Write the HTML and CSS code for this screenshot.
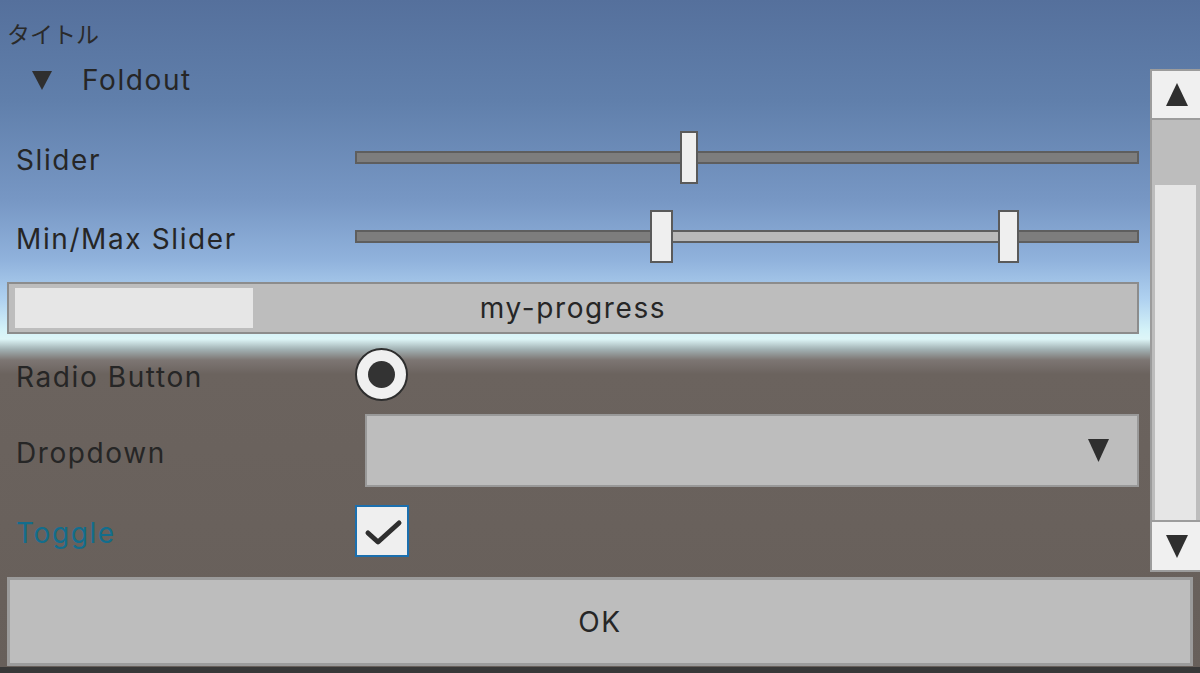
FILE: index.html
```html
<!DOCTYPE html>
<html lang="ja">
<head>
  <meta charset="UTF-8" />
  <meta name="viewport" content="width=device-width, initial-scale=1.0" />
  <title>UI Toolkit Sample</title>
  <link rel="stylesheet" href="styles.css">
</head>
<body>

  <div class="title">タイトル</div>

  <div class="main">
    <div class="content">
      <div class="foldout-header">
        <svg class="foldout-arrow" width="20" height="20" viewBox="0 0 20 20"><polygon points="0,1 20,1 10,20" fill="#2f2f2f"/></svg>
        <span>Foldout</span>
      </div>

      <div class="row row-slider">
        <label class="field-label">Slider</label>
        <div class="track">
          <div class="thumb" style="left: 323px"></div>
        </div>
      </div>

      <div class="row row-minmax">
        <label class="field-label">Min/Max Slider</label>
        <div class="track">
          <div class="range" style="left: 316px; width: 327px"></div>
          <div class="thumb thumb-wide" style="left: 293px"></div>
          <div class="thumb thumb-mid" style="left: 641px"></div>
        </div>
      </div>

      <div class="progress">
        <div class="progress-fill" style="width: 238px"></div>
        <span class="progress-text">my-progress</span>
      </div>

      <div class="row row-radio">
        <label class="field-label">Radio Button</label>
        <div class="radio"><div class="radio-dot"></div></div>
      </div>

      <div class="row row-dropdown">
        <label class="field-label">Dropdown</label>
        <div class="dropdown">
          <svg width="21" height="23" viewBox="0 0 21 23"><polygon points="0,0 21,0 10.5,23" fill="#2f2f2f"/></svg>
        </div>
      </div>

      <div class="row row-toggle">
        <label class="field-label toggle-label">Toggle</label>
        <div class="checkbox">
          <svg width="50" height="48" viewBox="0 0 50 48"><polyline points="11,26 21,35 42,16" fill="none" stroke="#2f2f2f" stroke-width="5" stroke-linecap="round" stroke-linejoin="round"/></svg>
        </div>
      </div>
    </div>

    <div class="scrollbar">
      <div class="scroll-btn scroll-up">
        <svg width="22" height="23" viewBox="0 0 22 23"><polygon points="11,0 22,23 0,23" fill="#2f2f2f"/></svg>
      </div>
      <div class="scroll-track">
        <div class="scroll-thumb"></div>
      </div>
      <div class="scroll-btn scroll-down">
        <svg width="22" height="23" viewBox="0 0 22 23"><polygon points="0,0 22,0 11,23" fill="#2f2f2f"/></svg>
      </div>
    </div>
  </div>

  <button class="ok-button">OK</button>
  <div class="bottom-edge"></div>

</body>
</html>
```

FILE: styles.css
```css
html, body {
  margin: 0;
  padding: 0;
}
body {
  height: 673px;
  overflow: hidden;
  display: flex;
  flex-direction: column;
  font-family: Inter, "Noto Sans", sans-serif;
  font-size: 28px;
  letter-spacing: 1.6px;
  color: #262626;
  background: linear-gradient(to bottom,
    #55709c 0px,
    #607fab 100px,
    #7797c4 200px,
    #90b2dc 260px,
    #b0d2f0 300px,
    #d4f2f8 330px,
    #def6f8 339px,
    #a3b3b5 349px,
    #7d7673 360px,
    #6b635e 374px,
    #675f5a 673px);
}
.title {
  height: 60px;
  box-sizing: border-box;
  padding: 20px 0 0 7px;
  font-family: "Noto Sans CJK JP", sans-serif;
  font-size: 23px;
  letter-spacing: 0;
  line-height: 26px;
  color: #2a2a2a;
}
.main {
  display: flex;
  height: 517px;
}
.content {
  width: 1150px;
  box-sizing: border-box;
  padding-right: 11px;
  display: flex;
  flex-direction: column;
}
.foldout-header {
  height: 40px;
  display: flex;
  align-items: center;
  padding-left: 32px;
}
.foldout-arrow {
  margin-right: 30px;
}
.row {
  display: flex;
  align-items: center;
  padding-left: 16px;
}
.field-label {
  width: 339px;
  flex-shrink: 0;
  padding-top: 4px;
}
.row-slider {
  margin-top: 31px;
  height: 53px;
}
.row-minmax {
  margin-top: 26px;
  height: 53px;
}
.row-radio {
  margin-top: 14px;
  height: 53px;
}
.row-dropdown {
  margin-top: 13px;
  height: 73px;
}
.row-toggle {
  margin-top: 18px;
  height: 52px;
}
.track {
  flex: 1;
  height: 13px;
  box-sizing: border-box;
  border: 2px solid #5e5e5e;
  background: #7d7d7d;
  position: relative;
}
.range {
  position: absolute;
  top: 0;
  bottom: 0;
  background: #b9b9b9;
}
.thumb {
  position: absolute;
  top: -22px;
  width: 18px;
  height: 53px;
  box-sizing: border-box;
  border: 2px solid #5a5a5a;
  background: #efefef;
}
.thumb-wide {
  width: 23px;
}
.thumb-mid {
  width: 21px;
}
.progress {
  margin: 19px 0 0 7px;
  height: 52px;
  box-sizing: border-box;
  border: 2px solid #8c8c8c;
  background: #bdbdbd;
  padding: 4px 6px;
  position: relative;
  display: flex;
}
.progress-fill {
  background: #e6e6e6;
  height: 100%;
}
.progress-text {
  position: absolute;
  left: 0;
  right: 0;
  top: 0;
  bottom: 0;
  display: flex;
  align-items: center;
  justify-content: center;
}
.radio {
  width: 53px;
  height: 53px;
  box-sizing: border-box;
  border-radius: 50%;
  border: 2px solid #2e2e2e;
  background: #f0f0f0;
  display: flex;
  align-items: center;
  justify-content: center;
}
.radio-dot {
  width: 27px;
  height: 27px;
  border-radius: 50%;
  background: #333;
}
.dropdown {
  flex: 1;
  margin-left: 10px;
  height: 73px;
  box-sizing: border-box;
  border: 2px solid #999;
  background: #bdbdbd;
  display: flex;
  align-items: center;
  justify-content: flex-end;
  padding-right: 28px;
}
.toggle-label {
  color: #136d8c;
}
.checkbox {
  width: 54px;
  height: 52px;
  box-sizing: border-box;
  border: 2px solid #1b6fae;
  background: #efefef;
  display: flex;
}
.scrollbar {
  width: 50px;
  margin-top: 9px;
  height: 503px;
  display: flex;
  flex-direction: column;
}
.scroll-btn {
  height: 51px;
  box-sizing: border-box;
  border: 2px solid #9c9c9c;
  border-right: none;
  background: #f0f0f0;
  display: flex;
  align-items: center;
  justify-content: center;
}
.scroll-up {
  padding-left: 2px;
}
.scroll-down {
  height: 52px;
  padding-left: 2px;
}
.scroll-track {
  flex: 1;
  background: #bdbdbd;
  border-left: 2px solid #9c9c9c;
  padding: 65px 4px 0 3px;
  display: flex;
  flex-direction: column;
}
.scroll-thumb {
  flex: 1;
  background: #e6e6e6;
}
.ok-button {
  margin: 0 7px;
  height: 89px;
  box-sizing: border-box;
  border: 3px solid #9b9b9b;
  background: #bdbdbd;
  font-family: Inter, "Noto Sans", sans-serif;
  font-size: 28px;
  letter-spacing: 1.6px;
  color: #262626;
  padding: 0;
}
.bottom-edge {
  margin-top: 1px;
  flex: 1;
  background: #383838;
}
```
